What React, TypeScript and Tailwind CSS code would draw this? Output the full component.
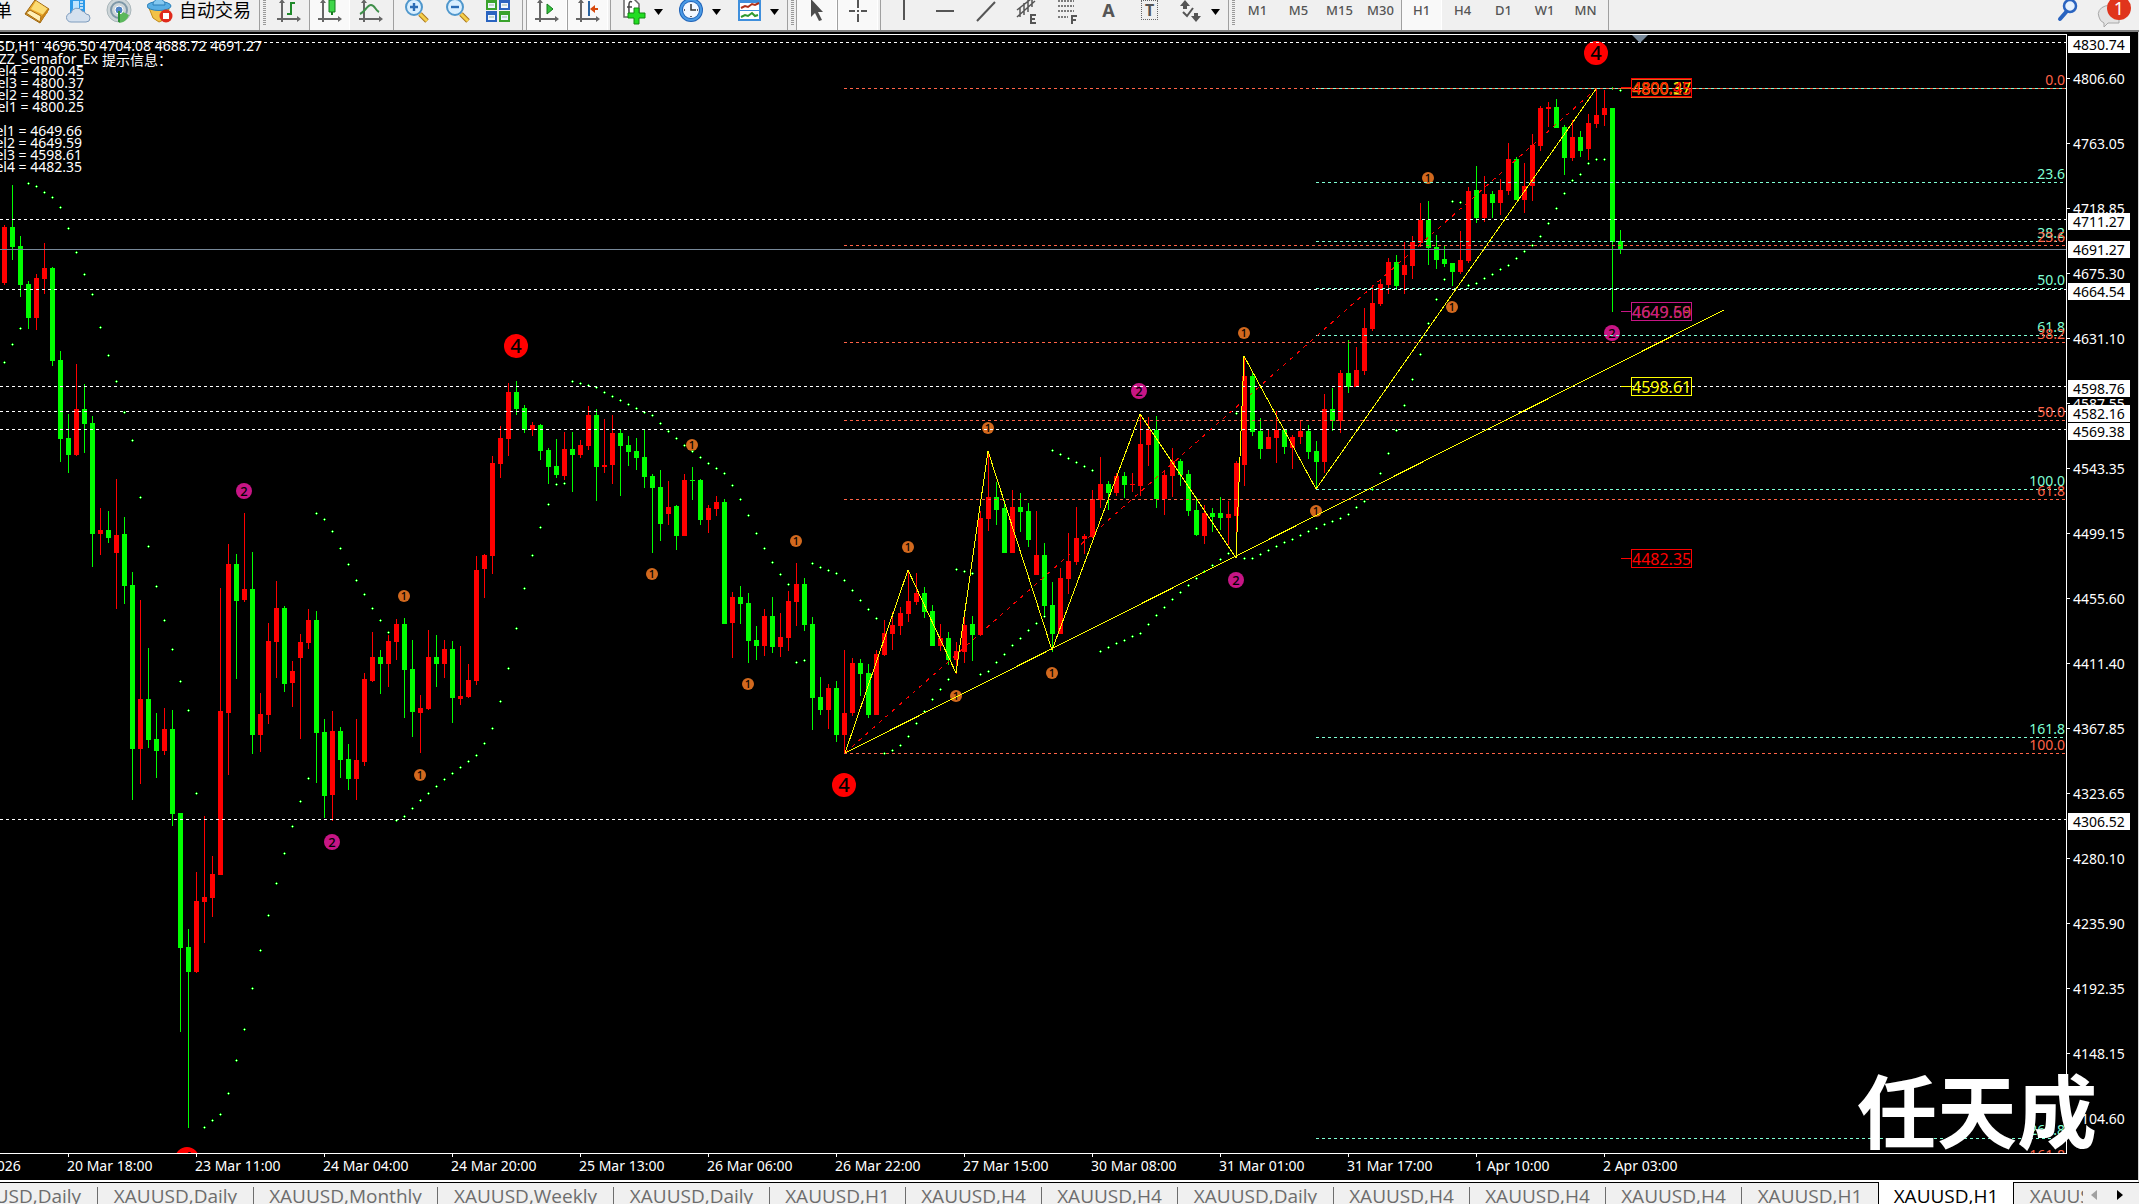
import React from "react";

type Candle = [string, number, number, number, number];

/* colour, high, body top, body bottom, low */
const candles: Candle[] = [
  ["R",225,227,283,285],["G",185,227,247,260],["G",236,246,285,297],["G",281,284,318,329],["R",274,278,318,330],
  ["R",243,268,279,294],["G",267,268,361,366],["G",351,360,439,462],["G",414,438,455,473],["R",364,409,455,456],
  ["G",384,409,424,453],["G",416,423,534,567],["R",508,530,534,555],["G",511,530,538,543],["R",479,535,553,609],
  ["G",517,534,586,604],["G",572,585,749,800],["R",600,699,749,784],["G",648,699,740,748],["G",713,739,751,778],
  ["R",708,729,751,755],["G",710,729,814,826],["G",813,813,948,1032],["G",929,947,972,1128],["R",872,901,972,973],
  ["R",816,897,902,943],["R",856,874,898,917],["R",588,711,875,875],["R",544,564,713,775],["G",554,564,601,679],
  ["R",513,589,600,602],["G",552,589,735,754],["R",693,714,735,752],["R",623,641,715,724],["R",581,608,642,678],
  ["G",606,608,684,692],["R",661,671,683,707],["R",634,642,658,739],["R",609,620,643,649],["G",611,620,733,783],
  ["G",719,732,796,818],["R",711,731,795,821],["G",727,731,760,778],["G",744,759,779,790],["R",719,760,779,800],
  ["R",673,679,762,766],["R",632,657,681,682],["G",650,657,664,694],["R",635,641,664,687],["R",619,624,642,660],
  ["G",618,624,670,718],["G",640,669,712,737],["R",695,708,713,753],["R",630,657,709,710],["G",635,657,664,687],
  ["R",640,649,664,678],["G",641,649,698,723],["R",646,696,699,705],["R",664,680,697,698],["R",556,570,681,685],
  ["R",554,555,569,598],["R",456,463,556,574],["R",426,438,464,478],["R",383,392,439,456],["G",381,392,409,415],
  ["G",405,408,430,433],["R",422,425,430,436],["G",424,425,451,460],["G",448,450,467,484],["G",439,466,475,478],
  ["R",432,449,476,480],["G",432,449,455,492],["R",440,445,455,458],["R",406,415,446,450],["G",409,415,467,501],
  ["R",419,465,467,473],["R",415,433,465,484],["G",430,433,446,496],["G",436,445,452,466],["G",438,451,458,470],
  ["G",430,457,477,488],["G",474,476,488,553],["G",470,487,524,541],["R",481,507,514,525],["G",505,506,536,550],
  ["R",474,480,536,536],["G",467,480,481,500],["G",479,480,520,525],["R",505,508,520,533],["R",496,502,509,516],
  ["G",499,502,624,624],["R",592,597,623,658],["G",586,597,604,624],["G",593,603,641,663],["G",626,640,646,660],
  ["R",609,616,646,656],["G",597,616,647,653],["R",613,637,647,657],["R",591,601,638,651],["R",563,584,602,626],
  ["G",578,584,625,631],["G",617,624,698,730],["G",677,697,710,715],["R",684,688,710,729],["G",681,688,735,742],
  ["R",650,713,735,753],["R",658,663,713,716],["G",659,663,674,696],["G",664,673,715,718],["R",650,654,715,715],
  ["R",620,633,655,656],["R",612,625,634,650],["R",607,613,626,635],["R",570,601,614,622],["R",573,593,602,605],
  ["G",587,593,612,618],["G",605,611,646,646],["R",624,638,646,651],["G",632,638,660,665],["R",642,651,660,674],
  ["R",614,625,652,663],["G",616,624,635,661],["R",511,518,635,636],["R",451,497,519,531],["G",482,497,510,525],
  ["G",500,508,553,553],["R",490,507,553,553],["G",493,507,512,532],["G",503,511,540,547],["R",511,555,575,575],
  ["G",543,555,606,617],["G",582,605,634,652],["R",568,578,634,634],["R",533,561,579,594],["R",507,538,562,565],
  ["R",534,536,539,554],["R",490,499,537,538],["R",457,484,500,508],["G",481,484,493,510],["R",473,476,493,496],
  ["G",472,476,485,498],["R",473,484,485,492],["R",414,444,486,496],["R",417,430,445,466],["G",416,430,499,508],
  ["R",470,475,499,515],["R",448,461,476,497],["G",459,461,475,486],["G",470,474,511,516],["G",497,510,535,536],
  ["R",505,513,536,544],["G",508,513,517,532],["G",497,513,518,530],["R",501,514,518,545],["R",461,463,516,558],
  ["R",356,376,465,486],["G",373,376,432,436],["G",418,431,449,459],["R",430,437,449,449],["R",411,430,438,463],
  ["G",429,430,447,454],["R",435,437,448,469],["R",420,431,437,444],["G",425,431,452,459],["G",441,451,462,489],
  ["R",394,409,462,473],["G",388,409,421,431],["R",370,373,421,433],["G",340,373,387,393],["R",347,370,387,387],
  ["R",308,328,371,375],["R",285,303,329,331],["R",279,284,304,306],["R",258,262,285,294],["G",255,262,286,290],
  ["R",242,265,275,294],["R",236,242,266,279],["R",203,220,243,247],["G",201,220,248,265],["G",235,247,260,269],
  ["G",246,259,264,267],["G",263,263,272,286],["R",231,260,272,274],["R",187,191,261,263],["G",166,190,218,223],
  ["R",176,194,218,222],["G",191,194,203,218],["R",179,190,203,215],["R",143,159,191,195],["G",157,159,200,200],
  ["R",163,186,200,213],["R",134,145,186,201],["R",106,108,146,151],["R",102,107,109,127],["G",99,107,128,128],
  ["G",125,127,158,175],["R",120,137,158,161],["G",131,137,151,157],["R",114,123,149,160],["R",89,115,124,128],
  ["R",90,108,115,126],["G",108,108,242,312],["G",230,241,250,254],
];

/* parabolic SAR, one value for each candle */
const sar = [
  362,344,328,183,186,192,197,207,228,252,274,294,327,355,381,412,440,497,546,586,620,649,681,710,793,
  1127,1120,1114,1093,1060,1029,988,950,915,883,853,826,801,778,513,519,531,548,564,580,594,608,620,632,820,
  816,808,800,793,786,779,773,767,761,755,743,728,701,668,628,588,555,527,504,484,483,381,383,385,387,
  392,396,400,404,408,412,415,423,431,438,445,451,457,463,468,473,485,499,515,533,548,562,574,584,662,
  660,563,567,570,573,580,590,600,609,618,753,750,745,736,723,711,699,689,679,569,571,573,674,671,662,
  654,645,638,630,623,616,450,454,458,462,466,470,651,647,643,640,636,633,624,615,607,599,592,585,578,
  571,565,559,553,413,558,558,554,550,546,542,539,535,531,528,524,521,518,514,507,501,489,473,453,430,
  405,379,354,323,299,279,201,202,285,283,278,274,269,265,258,251,245,236,223,208,193,180,174,163,159,
  159,88,90,
];

const levels = [42, 219, 289, 386, 411, 429, 819];
const aqua: [number, string][] = [[88, ""], [182, "23.6"], [241, "38.2"], [288, "50.0"], [335, "61.8"], [489, "100.0"], [737, "161.8"], [1138, "261.8"]];
const tomato: [number, string][] = [[88, "0.0"], [245, "23.6"], [342, "38.2"], [420, "50.0"], [499, "61.8"], [753, "100.0"], [1163, "161.8"]];
const ones = [[404,596],[420,775],[692,445],[652,574],[796,541],[748,684],[908,547],[988,428],[956,696],[1052,673],[1244,333],[1316,511],[1428,178],[1452,307]];
const twos = [[244,491],[332,842],[1139,391],[1236,580],[1612,333]];
const fours = [[516,346],[844,785],[1596,53],[187,1159]];

const axisTicks = ["4806.60","4763.05","4718.85","4675.30","4631.10","4587.55","4543.35","4499.15","4455.60","4411.40","4367.85","4323.65","4280.10","4235.90","4192.35","4148.15","4104.60"];
const axisBoxes: [number, string][] = [[36,"4830.74"],[213,"4711.27"],[241,"4691.27"],[283,"4664.54"],[380,"4598.76"],[405,"4582.16"],[423,"4569.38"],[813,"4306.52"]];
const times = ["19 Mar 2026","20 Mar 18:00","23 Mar 11:00","24 Mar 04:00","24 Mar 20:00","25 Mar 13:00","26 Mar 06:00","26 Mar 22:00","27 Mar 15:00","30 Mar 08:00","31 Mar 01:00","31 Mar 17:00","1 Apr 10:00","2 Apr 03:00"];

function Marker({ x, y, r, color, label, size }: { x: number; y: number; r: number; color: string; label: string; size: number }) {
  return (
    <g>
      <circle cx={x} cy={y} r={r} fill={color} />
      <text x={x} y={y + Math.round(size * 0.36)} textAnchor="middle" fontSize={size} fontWeight={500} fill="#000">{label}</text>
    </g>
  );
}

function PriceTag({ y, color, text }: { y: number; color: string; text: string }) {
  return (
    <g>
      <path d={`M1621 ${y + 9}.5H1631M1631.5 ${y}.5h60v18h-60z`} stroke={color} fill="none" shapeRendering="crispEdges" />
      <text x={1632} y={y + 16} fontSize={16} fill={color}>{text}</text>
    </g>
  );
}

function Plot() {
  return (
    <svg className="block h-full w-full" role="img" aria-label="XAUUSD H1 chart">
      <g transform="translate(0,-35)">
        <g shapeRendering="crispEdges">
          {candles.map(([c, h, t, b, l], i) => (
            <g key={i} fill={c === "R" ? "#ff0000" : "#00ff00"}>
              <rect x={4 + 8 * i} y={h} width={1} height={Math.max(1, l - h)} />
              <rect x={2 + 8 * i} y={t} width={5} height={Math.max(1, b - t)} />
            </g>
          ))}
        </g>
        {ones.map(([x, y]) => <Marker key={x} x={x} y={y} r={6} color="#d2691e" label="1" size={11} />)}
        {twos.map(([x, y]) => <Marker key={x} x={x} y={y} r={8} color="#c71585" label="2" size={13} />)}
        {fours.map(([x, y]) => <Marker key={x} x={x} y={y} r={12} color="#ff0000" label="4" size={20} />)}
        <g shapeRendering="crispEdges">
          {sar.map((y, i) => (
            <g key={i}>
              <path d={`M${3 + 8 * i} ${y}.5h3M${4 + 8 * i}.5 ${y - 1}v3`} stroke="#00ff00" />
              <rect x={4 + 8 * i} y={y} width={1} height={1} fill="#fff" />
            </g>
          ))}
        </g>
        <g strokeDasharray="3 3" shapeRendering="crispEdges">
          {levels.map((y) => <line key={y} x1={0} x2="100%" y1={y + 0.5} y2={y + 0.5} stroke="#fff" />)}
          {aqua.map(([y]) => <line key={y} x1={1316} x2="100%" y1={y + 0.5} y2={y + 0.5} stroke="#7fffd4" strokeDasharray={y === 88 ? "none" : "3 3"} />)}
          {tomato.map(([y]) => <line key={y} x1={844} x2="100%" y1={y + 0.5} y2={y + 0.5} stroke="#ff6347" />)}
        </g>
        <line x1={0} x2="100%" y1={249.5} y2={249.5} stroke="#778899" shapeRendering="crispEdges" />
        <g fill="none" shapeRendering="crispEdges">
          <path d="M845 753L1596 89" stroke="#ff0000" strokeDasharray="4 5" />
          <path d="M845 753L908 570L956 673L988 451L1052 650L1140 414L1236 558L1244 356L1316 489L1596 89M845 753L1724 310" stroke="#ffff00" />
        </g>
        <path d="M1632 35h16l-8 8z" fill="#778899" />

        <g className="font-['Noto_Sans','Noto_Sans_CJK_SC',sans-serif]">
          <PriceTag y={79} color="#d2691e" text="4800.25" />
          <PriceTag y={78} color="#ffff00" text="4800.37" />
          <PriceTag y={78} color="#ff0000" text="4800.45" />
          <PriceTag y={302} color="#d2691e" text="4649.59" />
          <PriceTag y={302} color="#c71585" text="4649.66" />
          <PriceTag y={377} color="#ffff00" text="4598.61" />
          <PriceTag y={549} color="#ff0000" text="4482.35" />
          <g fontSize={14} fill="#fff">
            <text x={262} y={51} textAnchor="end">{"XAUUSD,H1\u00a0\u00a04696.50 4704.08 4688.72 4691.27"}</text>
            <text x={98} y={64} textAnchor="end">ZZ_Semafor_Ex</text>
            <text x={102} y={65}>提示信息：</text>
            {["4 = 4800.45", "3 = 4800.37", "2 = 4800.32", "1 = 4800.25"].map((t, i) => (
              <text key={t} x={84} y={76 + 12 * i} textAnchor="end">{"Level" + t}</text>
            ))}
            {["1 = 4649.66", "2 = 4649.59", "3 = 4598.61", "4 = 4482.35"].map((t, i) => (
              <text key={t} x={82} y={136 + 12 * i} textAnchor="end">{"Level" + t}</text>
            ))}
          </g>
          <svg x="100%" y={0} overflow="visible" fontSize={14} textAnchor="end">
            {aqua.map(([y, t]) => <text key={y} x={-1} y={y - 3} fill="#7fffd4">{t}</text>)}
            {tomato.map(([y, t]) => <text key={y} x={-1} y={y - 3} fill="#ff6347">{t}</text>)}
          </svg>
        </g>
      </g>
    </svg>
  );
}

function PriceAxis() {
  return (
    <svg className="block h-full w-[71px] shrink-0 font-['Noto_Sans',sans-serif]" fontSize={14} role="img" aria-label="Price scale">
      <g transform="translate(0,-34)">
        {axisTicks.map((t, i) => (
          <g key={t} fill="#fff">
            <rect x={0} y={78 + 65 * i} width={3} height={1} />
            <text x={6} y={84 + 65 * i}>{t}</text>
          </g>
        ))}
        {axisBoxes.map(([y, t]) => (
          <g key={t}>
            <rect x={1} y={y} width={62} height={17} fill="#fff" />
            <text x={6} y={y + 14} fill="#000">{t}</text>
          </g>
        ))}
      </g>
    </svg>
  );
}

/* ---------- toolbar ---------- */

function Icon({ children }: { children: React.ReactNode }) {
  return <svg width={26} height={26} viewBox="0 0 26 26" fill="none" className="shrink-0">{children}</svg>;
}

function Tool({ label, pressed, children }: { label: string; pressed?: boolean; children: React.ReactNode }) {
  return (
    <button
      type="button"
      aria-label={label}
      aria-pressed={pressed}
      className={
        pressed
          ? "flex h-full w-[41px] shrink-0 items-center justify-center border-x border-l-[#a0a0a0] border-r-white bg-[#f9f9f9] text-[13px] font-medium text-[#555]"
          : "flex h-full w-[41px] shrink-0 items-center justify-center text-[13px] font-medium text-[#555]"
      }
    >
      {children}
    </button>
  );
}

function Arrow({ label }: { label: string }) {
  return (
    <button type="button" aria-label={label} className="flex h-full w-[17px] shrink-0 items-center">
      <svg width={9} height={6} viewBox="0 0 9 6"><path d="M0 0h9L4.500 6z" fill="#000" /></svg>
    </button>
  );
}

function Sep({ className }: { className: string }) {
  return <div className={"flex h-full shrink-0 justify-center " + className}><div className="h-full w-px bg-[#a0a0a0]" /></div>;
}

function Grip() {
  return (
    <div className="flex h-full w-[9px] shrink-0 justify-between">
      <div className="h-full w-px bg-[#a0a0a0]" />
      <div className="my-1 mr-0.5 w-[3px] bg-[repeating-linear-gradient(to_bottom,#999_0,#999_1px,#f0f0f0_1px,#f0f0f0_2px)]" />
    </div>
  );
}

const Axes = () => (
  <g>
    <path d="M6 2v21M1 20h20" stroke="#666" strokeWidth={2} />
    <path d="M6 0l3 4H3zM25 20l-4 3v-6z" fill="#666" />
  </g>
);

function Magnifier({ minus }: { minus?: boolean }) {
  return (
    <Icon>
      <path d="M17 15l7 7" stroke="#a8741a" strokeWidth={5} />
      <path d="M17 15l7 7" stroke="#f5cf4a" strokeWidth={3} />
      <circle cx={11} cy={8} r={8} fill="#d9efff" stroke="#4f97cc" strokeWidth={2} />
      <path d={minus ? "M7 8h8" : "M7 8h8M11 4v8"} stroke="#2b6cb5" strokeWidth={2.4} />
    </Icon>
  );
}

function Toolbar() {
  return (
    <header className="flex h-8 shrink-0 flex-col justify-end overflow-hidden border-b-2 border-[#808080] bg-[#f0f0f0]">
      <div className="flex h-9 shrink-0 items-center font-['Noto_Sans','Noto_Sans_CJK_SC',sans-serif]">
        <button type="button" className="flex h-full w-4 shrink-0 items-center justify-end pr-1 pb-1 text-[18px] whitespace-nowrap text-black">新订单</button>
        <Tool label="MetaEditor">
          <Icon>
            <path d="M1 15L11 1l14 9-9 14z" fill="#e9a92c" stroke="#9a6410" />
            <path d="M7 10l5-8 12 8-4 6z" fill="#fbdc74" />
            <path d="M2 14l4-3 11 6-1 6z" fill="#fff0b8" stroke="#a86a10" />
            <path d="M17 18l7-9v4l-8 10z" fill="#c98518" />
          </Icon>
        </Tool>
        <Tool label="MQL5 cloud">
          <Icon>
            <path d="M5 0h15v16H5z" fill="#2e9ae8" />
            <path d="M8 2h6v12H8z" fill="#bfe4ff" />
            <path d="M15 3h3M15 6h3M15 9h3" stroke="#e6f5ff" strokeWidth={1.500} />
            <path d="M6 23a4.500 4.500 0 010-9 6 6 0 0111-2 5 5 0 014 3 4 4 0 010 8z" fill="#d5e1ef" stroke="#7f9cbd" />
          </Icon>
        </Tool>
        <Tool label="Signals">
          <Icon>
            <circle cx={13} cy={11} r={12} fill="#cdd5d8" stroke="#a9b6ba" />
            <circle cx={13} cy={11} r={8} stroke="#7e98a8" strokeWidth={2} />
            <path d="M13 11l10 5a12 12 0 01-10 8z" fill="#5cb85c" />
            <circle cx={13} cy={11} r={4} fill="#4d82c4" stroke="#fff" />
            <path d="M13 12v11" stroke="#2f8f3a" strokeWidth={2} />
          </Icon>
        </Tool>
        <button type="button" className="flex h-full w-[120px] shrink-0 items-center gap-1.5 pl-2 text-[18px] whitespace-nowrap text-black">
          <Icon>
            <path d="M2 9l20 1-3 10-7 3-6-4z" fill="#f3c246" stroke="#c18a1a" />
            <ellipse cx={12} cy={7} rx={12} ry={4.500} fill="#58aee4" stroke="#2b7fb8" />
            <path d="M6 6c0-8 12-8 12 0z" fill="#84c8f0" stroke="#2b7fb8" />
            <circle cx={19} cy={17} r={6.500} fill="#e02a1c" />
            <path d="M16 14h6v6h-6z" fill="#fff" />
          </Icon>
          <span className="pb-1">自动交易</span>
        </button>
        <Grip />
        <Tool label="Bar chart"><Icon><Axes /><path d="M15 3v13M15 4h4M11 15h4" stroke="#1f8a2a" strokeWidth={2} /></Icon></Tool>
        <Tool label="Candlesticks" pressed><Icon><Axes /><path d="M15 0v16" stroke="#147a1c" strokeWidth={2} /><path d="M12 1h6v12h-6z" fill="#3fd64a" stroke="#147a1c" /></Icon></Tool>
        <Tool label="Line chart"><Icon><Axes /><path d="M2 15c5-2 7-9 11-9s4 5 8 7" stroke="#3f8f4a" strokeWidth={2} /></Icon></Tool>
        <Sep className="w-1" />
        <Tool label="Zoom in"><Magnifier /></Tool>
        <Tool label="Zoom out"><Magnifier minus /></Tool>
        <Tool label="Tile windows">
          <Icon>
            <path d="M1 0h11v11H1zM14 12h11v11H14z" fill="#3aa32c" />
            <path d="M14 0h11v11H14zM1 12h11v11H1z" fill="#2a64c0" />
            <path d="M3 4h7v5H3zM16 4h7v5h-7zM3 16h7v5H3zM16 16h7v5h-7z" fill="#eef6ff" />
            <path d="M4 6h5M17 6h5M4 18h5M17 18h5" stroke="#9bb8a0" />
          </Icon>
        </Tool>
        <Sep className="w-2" />
        <Tool label="Auto scroll" pressed><Icon><Axes /><path d="M13 5v10l6-5z" fill="#35c13d" stroke="#147a1c" /></Icon></Tool>
        <Tool label="Chart shift" pressed><Icon><Axes /><path d="M14 2v15" stroke="#2a64a0" strokeWidth={2} /><path d="M17 10h6" stroke="#d8480c" strokeWidth={2} /><path d="M15 10l5-4v8z" fill="#d8480c" /></Icon></Tool>
        <Sep className="w-[5px]" />
        <Tool label="Indicators">
          <Icon>
            <path d="M3 0h10l5 5v13H3z" fill="#fff" stroke="#666" strokeWidth={1.500} />
            <path d="M11 3c-4-2-3 4-3 11M6 8h5" stroke="#444" strokeWidth={1.500} />
            <path d="M13 9h5v5h6v5h-6v6h-5v-6H7v-5h6z" fill="#22dd22" stroke="#108a10" />
          </Icon>
        </Tool>
        <Arrow label="Indicator list" />
        <Tool label="Periods">
          <Icon>
            <circle cx={12} cy={11} r={12} fill="#1e62b8" />
            <circle cx={12} cy={11} r={10} stroke="#4a9ae4" strokeWidth={2} />
            <circle cx={12} cy={11} r={8} fill="#f2f8ff" />
            <path d="M12 5v6h5M12 18v-1M5 11h1M18 11h1" stroke="#333" strokeWidth={1.500} />
          </Icon>
        </Tool>
        <Arrow label="Period list" />
        <Tool label="Templates">
          <Icon>
            <path d="M1 0h23v22H1z" fill="#3f8fdc" />
            <path d="M3 4h19v7H3zM3 12h19v8H3z" fill="#fff" />
            <path d="M4 9l4-2 3 1 4-3 3 1 4-2" stroke="#b03018" strokeWidth={2} />
            <path d="M4 18l4-2 3 1 4-3 3 3 3-1" stroke="#2f9a2f" strokeWidth={2} />
          </Icon>
        </Tool>
        <Arrow label="Template list" />
        <Grip />
        <Tool label="Cursor" pressed><Icon><path d="M7 0v18l4-4 4 8 3-1-4-8h5z" fill="#4d4d4d" /></Icon></Tool>
        <Tool label="Crosshair" pressed><Icon><path d="M13 0v9M13 15v8M4 12h6M16 12h6" stroke="#555" strokeWidth={2} /><path d="M12 11h2v2h-2z" fill="#555" /></Icon></Tool>
        <Sep className="w-[5px]" />
        <Tool label="Vertical line"><Icon><path d="M13 1v20" stroke="#555" strokeWidth={2} /></Icon></Tool>
        <Tool label="Horizontal line"><Icon><path d="M4 12h18" stroke="#555" strokeWidth={2} /></Icon></Tool>
        <Tool label="Trendline"><Icon><path d="M4 22L22 3" stroke="#555" strokeWidth={2} /></Icon></Tool>
        <Tool label="Equidistant channel">
          <Icon>
            <path d="M3 18L21 2M3 11L17 0M6 9v9M10 4v12M14 1v12M18 0v8" stroke="#555" strokeWidth={1.500} />
            <path d="M22 16h-5v8h5M17 20h4" stroke="#555" strokeWidth={2} />
          </Icon>
        </Tool>
        <Tool label="Fibonacci retracement">
          <Icon>
            <path d="M3 2h16M3 7h16M3 12h16M3 18h10" stroke="#555" strokeWidth={1.500} strokeDasharray="2 1" />
            <path d="M22 17h-5v8M17 21h4" stroke="#555" strokeWidth={2} />
          </Icon>
        </Tool>
        <Tool label="Text"><span className="pb-1 text-[18px] font-bold">A</span></Tool>
        <Tool label="Text label">
          <span className="mb-1 flex h-5 w-[17px] items-center justify-center border border-dotted border-[#666] text-base font-bold">T</span>
        </Tool>
        <Tool label="Arrows">
          <Icon>
            <path d="M7 1l5 6H9v3H5V7H2zM18 23l-5-6h3v-3h4v3h3z" fill="#555" />
            <path d="M5 13l4 4 6-8" stroke="#555" strokeWidth={2} />
          </Icon>
        </Tool>
        <Arrow label="Arrow list" />
        <Grip />
        {["M1", "M5", "M15", "M30", "H1", "H4", "D1", "W1", "MN"].map((t) => (
          <Tool key={t} label={t} pressed={t === "H1"}><span className="pb-0.5">{t}</span></Tool>
        ))}
        <Sep className="w-1" />
        <div className="ml-auto flex h-full items-center gap-3.5 pr-1">
          <button type="button" aria-label="Search">
            <Icon>
              <path d="M12 12l-7 8" stroke="#2a64c0" strokeWidth={4} strokeLinecap="round" />
              <circle cx={15} cy={7} r={6} fill="#e6f2ff" stroke="#2a64c0" strokeWidth={2.500} />
            </Icon>
          </button>
          <button type="button" aria-label="Notifications" className="relative h-9 w-10">
            <svg width={40} height={36} viewBox="0 0 40 36">
              <path d="M4 23a10 8 0 0120-6v12H13l-4 4v-4a9 8 0 01-5-6z" fill="#e3e3e3" stroke="#a8a8a8" />
              <circle cx={24} cy={14} r={12} fill="#e0341c" />
            </svg>
            <span className="absolute top-0.5 left-[18px] w-3 text-center text-[18px] leading-6 text-white">1</span>
          </button>
        </div>
      </div>
    </header>
  );
}

/* ---------- chart tabs ---------- */

const tabs: [string, string][] = [
  ["Daily", "w-[156px]"], ["Daily", "w-[156px]"], ["Monthly", "w-[184px]"], ["Weekly", "w-[176px]"], ["Daily", "w-[156px]"],
  ["H1", "w-[136px]"], ["H4", "w-[136px]"], ["H4", "w-[136px]"], ["Daily", "w-[156px]"], ["H4", "w-[136px]"],
  ["H4", "w-[136px]"], ["H4", "w-[136px]"], ["H1", "w-[136px]"], ["H1", "w-[136px]"], ["H1", "w-[136px]"],
];

function Tabs() {
  return (
    <nav className="flex h-[22px] shrink-0 overflow-hidden bg-[#f0f0f0] font-['Open_Sans',sans-serif] text-[19px] leading-[26px]">
      <div className="-ml-[58px] flex min-w-0 flex-1 overflow-hidden">
        {tabs.map(([t, w], i) =>
          i === 13 ? (
            <button key={i} type="button" aria-current="page" className={"flex h-8 shrink-0 items-start justify-center border-x border-black bg-white pt-px text-black " + w}>XAUUSD,{t}</button>
          ) : (
            <button key={i} type="button" className={"flex h-8 shrink-0 items-start border-t border-black text-[#6d6d6d] " + w}>
              <span className="flex-1">XAUUSD,{t}</span>
              {i < 12 && <span className="mt-1 h-full w-px bg-[#6d6d6d]" />}
            </button>
          )
        )}
      </div>
      <div className="flex w-[56px] shrink-0 items-start justify-between border-t border-black pt-[7px] pr-4 pl-2">
        <button type="button" aria-label="Scroll tabs left"><svg width={6} height={10} className="block"><path d="M6 0v10L0 5z" fill="#a0a0a0" /></svg></button>
        <button type="button" aria-label="Scroll tabs right"><svg width={6} height={10} className="block"><path d="M0 0v10l6-5z" fill="#000" /></svg></button>
      </div>
    </nav>
  );
}

export default function App() {
  return (
    <div className="relative flex h-screen flex-col overflow-hidden bg-black font-['Noto_Sans','Noto_Sans_CJK_SC',sans-serif]">
      <Toolbar />
      <main className="flex min-h-0 flex-1 flex-col border-r border-[#d0d0d0]">
        <div className="flex min-h-0 flex-1 pt-0.5">
          <div className="min-w-0 flex-1 border-y border-r border-white">
            <Plot />
          </div>
          <PriceAxis />
        </div>
        <div className="h-7 shrink-0 overflow-hidden border-b-2 border-white">
          <div className="-ml-[61px] flex text-sm leading-6 whitespace-nowrap text-white">
            {times.map((t) => (
              <div key={t} className="relative w-32 shrink-0">
                <div className="absolute top-0 left-px h-[3px] w-px bg-white" />
                {t}
              </div>
            ))}
          </div>
        </div>
      </main>
      <Tabs />
      <div className="pointer-events-none absolute right-[42px] bottom-[53px] text-[80px] leading-[80px] font-bold whitespace-nowrap text-white">任天成</div>
    </div>
  );
}
